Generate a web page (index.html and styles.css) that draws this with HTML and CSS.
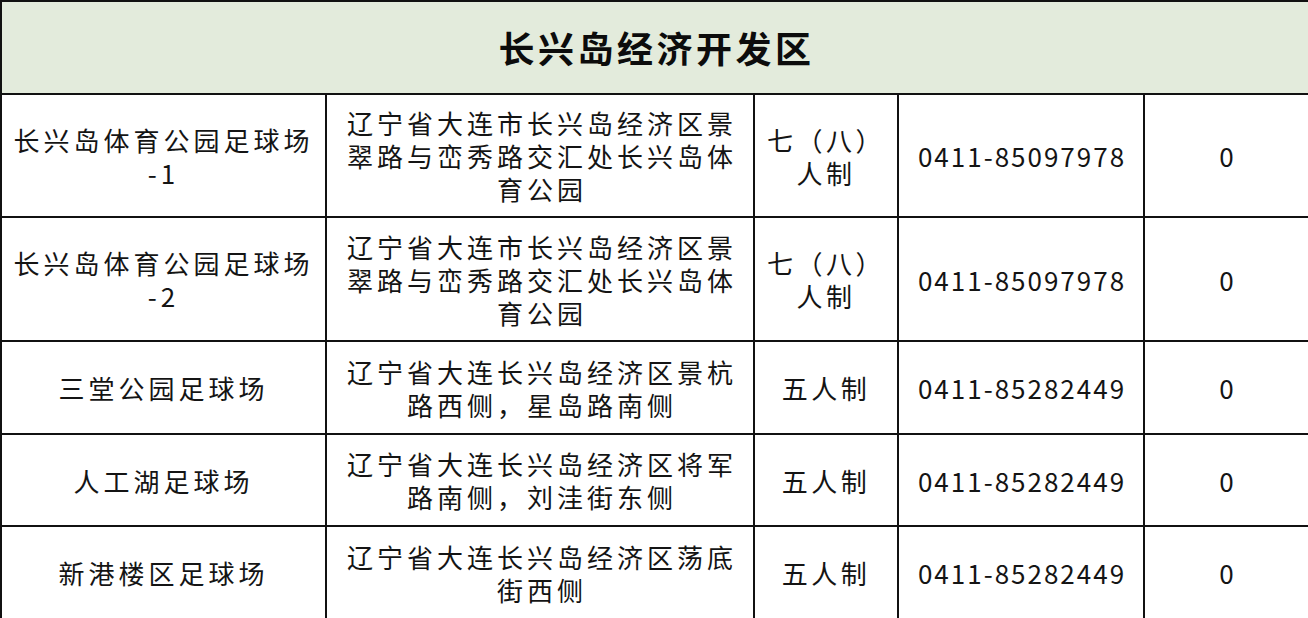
FILE: index.html
```html
<!DOCTYPE html>
<html lang="zh-CN">
<head>
<meta charset="utf-8">
<link rel="stylesheet" href="styles.css">
</head>
<body>
<table class="sheet">
  <colgroup>
    <col class="c1"><col class="c2"><col class="c3"><col class="c4"><col class="c5">
  </colgroup>
  <thead>
    <tr class="head-row"><th colspan="5" class="title">长兴岛经济开发区</th></tr>
  </thead>
  <tbody>
    <tr class="r-tall">
      <td>长兴岛体育公园足球场<br>-1</td>
      <td class="addr">辽宁省大连市长兴岛经济区景翠路与峦秀路交汇处长兴岛体育公园</td>
      <td class="type">七（八）<br>人制</td>
      <td class="num">0411-85097978</td>
      <td class="num">0</td>
    </tr>
    <tr class="r-tall2">
      <td>长兴岛体育公园足球场<br>-2</td>
      <td class="addr">辽宁省大连市长兴岛经济区景翠路与峦秀路交汇处长兴岛体育公园</td>
      <td class="type">七（八）<br>人制</td>
      <td class="num">0411-85097978</td>
      <td class="num">0</td>
    </tr>
    <tr class="r-mid">
      <td>三堂公园足球场</td>
      <td class="addr">辽宁省大连长兴岛经济区景杭路西侧，星岛路南侧</td>
      <td class="type">五人制</td>
      <td class="num">0411-85282449</td>
      <td class="num">0</td>
    </tr>
    <tr class="r-mid2">
      <td>人工湖足球场</td>
      <td class="addr">辽宁省大连长兴岛经济区将军路南侧，刘洼街东侧</td>
      <td class="type">五人制</td>
      <td class="num">0411-85282449</td>
      <td class="num">0</td>
    </tr>
    <tr class="r-last">
      <td>新港楼区足球场</td>
      <td class="addr">辽宁省大连长兴岛经济区荡底街西侧</td>
      <td class="type">五人制</td>
      <td class="num">0411-85282449</td>
      <td class="num">0</td>
    </tr>
  </tbody>
</table>
</body>
</html>
```

FILE: styles.css
```css
html, body {
  margin: 0;
  padding: 0;
  background: #ffffff;
}
.sheet {
  width: 1308px;
  height: 618px;
  border-collapse: collapse;
  table-layout: fixed;
  font-family: "Noto Sans CJK SC", "Noto Sans", sans-serif;
  color: #141414;
}
.c1 { width: 325px; }
.c2 { width: 428px; }
.c3 { width: 144px; }
.c4 { width: 246px; }
.c5 { width: 165px; }
.sheet th, .sheet td {
  border: 2px solid #111;
  padding: 0;
  text-align: center;
  vertical-align: middle;
  font-weight: 400;
  font-size: 26px;
  line-height: 33px;
  letter-spacing: 4px;
}
.head-row { height: 93px; }
.sheet .title {
  background: #e3ebdc;
  font-size: 36px;
  font-weight: 700;
  letter-spacing: 3.5px;
  color: #0c0c0c;
  padding-left: 3px;
}
.r-tall { height: 123px; }
.r-tall2 { height: 124px; }
.r-mid { height: 93px; }
.r-mid2 { height: 92px; }
.r-last { height: 93px; }
.sheet .addr {
  padding: 0 16px 0 20px;
}
.sheet .type {
  letter-spacing: 3.5px;
}
.sheet .num {
  letter-spacing: 2px;
  font-size: 26px;
  padding-left: 2px;
}
```
